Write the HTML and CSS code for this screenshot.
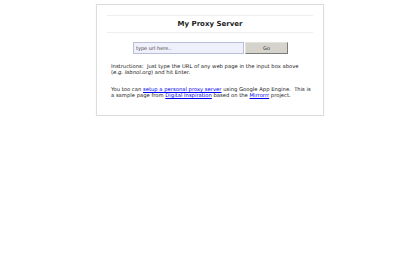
FILE: index.html
```html
<!DOCTYPE html>
<html>
<head>
<meta charset="utf-8">
<title>My Proxy Server</title>
<link rel="stylesheet" href="styles.css">
</head>
<body>
<div class="box">
  <h1 class="title">My Proxy Server</h1>
  <form class="form" onsubmit="return false">
    <input class="url" type="text" value="type url here..">
    <button class="go" type="submit">Go</button>
  </form>
  <p class="text">Instructions:&nbsp; Just type the URL of any web page in the input box above (<i>e.g.</i> <i>labnol.org</i>) and hit Enter.</p>
  <p class="text">You too can <a href="#">setup a personal proxy server</a> using Google App Engine.&nbsp; This is a sample page from <a href="#">Digital Inspiration</a> based on the <a href="#">Mirrorrr</a> project.</p>
</div>
</body>
</html>
```

FILE: styles.css
```css
html, body {
  margin: 0;
  padding: 0;
  background: #ffffff;
}
body {
  font-family: "DejaVu Sans", Verdana, sans-serif;
  color: #222222;
}
.box {
  box-sizing: border-box;
  width: 228px;
  height: 112px;
  margin: 4px auto 0;
  border: 1px solid #dcdcdc;
  box-shadow: 0 1px 1px #e6e6e6;
  padding: 10px 10px 0 10px;
  background: #ffffff;
}
.title {
  margin: 0;
  height: 16px;
  border-top: 1px solid #eeeeee;
  border-bottom: 1px solid #eeeeee;
  font-size: 7px;
  font-weight: bold;
  line-height: 16px;
  text-align: center;
  color: #222222;
}
.form {
  display: flex;
  justify-content: center;
  gap: 1px;
  margin: 9px 0 0;
  padding-left: 1px;
}
.url {
  box-sizing: border-box;
  width: 111px;
  height: 12px;
  margin: 0;
  padding: 0 2px;
  border: 1px solid #b8c0d8;
  background: #f0f0fc;
  font-family: "DejaVu Sans", sans-serif;
  font-size: 5px;
  color: #444444;
}
.go {
  box-sizing: border-box;
  width: 43px;
  height: 12px;
  margin: 0;
  padding: 0;
  border: 1px solid;
  border-color: #e4e2dc #7a7a7a #7a7a7a #e4e2dc;
  background: #d6d3cc;
  font-family: "DejaVu Sans", sans-serif;
  font-size: 5px;
  color: #333333;
}
.text {
  margin: 9px 0 0;
  padding: 0 2px 0 4px;
  font-size: 5.25px;
  line-height: 6.2px;
}
.text + .text {
  margin-top: 10.6px;
}
.text a {
  color: #0000ee;
}
```
